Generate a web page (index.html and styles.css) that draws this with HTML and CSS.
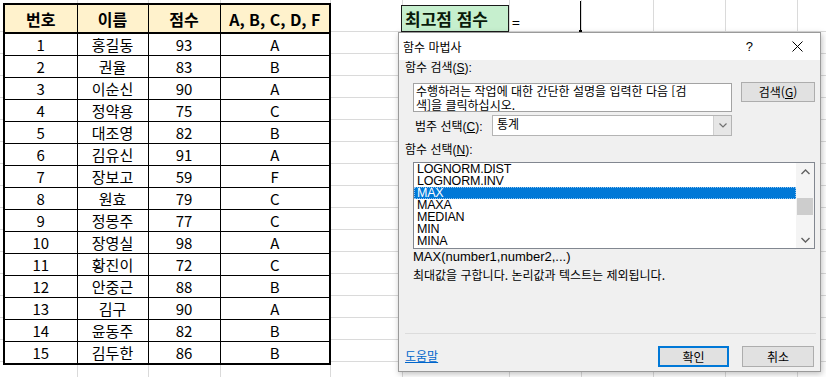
FILE: index.html
```html
<!DOCTYPE html>
<html lang="ko">
<head>
  <meta charset="UTF-8" />
  <title>함수 마법사</title>
  <link rel="stylesheet" href="styles.css">
</head>
<body>
  <div class="sheet">
    <table class="grades">
      <colgroup>
        <col class="c-no"><col class="c-name"><col class="c-score"><col class="c-grade">
      </colgroup>
      <thead>
        <tr><th>번호</th><th>이름</th><th>점수</th><th>A, B, C, D, F</th></tr>
      </thead>
      <tbody>
        <tr><td>1</td><td>홍길동</td><td>93</td><td>A</td></tr>
        <tr><td>2</td><td>권율</td><td>83</td><td>B</td></tr>
        <tr><td>3</td><td>이순신</td><td>90</td><td>A</td></tr>
        <tr><td>4</td><td>정약용</td><td>75</td><td>C</td></tr>
        <tr><td>5</td><td>대조영</td><td>82</td><td>B</td></tr>
        <tr><td>6</td><td>김유신</td><td>91</td><td>A</td></tr>
        <tr><td>7</td><td>장보고</td><td>59</td><td>F</td></tr>
        <tr><td>8</td><td>원효</td><td>79</td><td>C</td></tr>
        <tr><td>9</td><td>정몽주</td><td>77</td><td>C</td></tr>
        <tr><td>10</td><td>장영실</td><td>98</td><td>A</td></tr>
        <tr><td>11</td><td>황진이</td><td>72</td><td>C</td></tr>
        <tr><td>12</td><td>안중근</td><td>88</td><td>B</td></tr>
        <tr><td>13</td><td>김구</td><td>90</td><td>A</td></tr>
        <tr><td>14</td><td>윤동주</td><td>82</td><td>B</td></tr>
        <tr><td>15</td><td>김두한</td><td>86</td><td>B</td></tr>
      </tbody>
    </table>

    <div class="max-label">최고점 점수</div>
    <div class="formula">=</div>
  </div>

  <div class="dialog">
    <div class="dlg-title">
      <span>함수 마법사</span>
      <div class="dlg-controls">
        <span class="help-btn">?</span>
        <svg class="close-btn" width="11" height="11" viewBox="0 0 11 11">
          <path d="M0.5 0.5 L10.5 10.5 M10.5 0.5 L0.5 10.5" stroke="#000" stroke-width="1" fill="none"/>
        </svg>
      </div>
    </div>

    <div class="dlg-body">
      <div class="label">함수 검색(<u>S</u>):</div>
      <div class="search-row">
        <div class="search-input">수행하려는 작업에 대한 간단한 설명을 입력한 다음 [검<br>색]을 클릭하십시오.</div>
        <button class="btn search-btn">검색(<u>G</u>)</button>
      </div>

      <div class="category-row">
        <span class="category-label">범주 선택(<u>C</u>):</span>
        <div class="combo">
          <span class="combo-value">통계</span>
          <span class="combo-arrow">
            <svg width="8" height="5" viewBox="0 0 8 5"><path d="M0.5 0.5 L4 4 L7.5 0.5" stroke="#707070" stroke-width="1.2" fill="none"/></svg>
          </span>
        </div>
      </div>

      <div class="label pick-label">함수 선택(<u>N</u>):</div>
      <div class="listbox">
        <ul class="fn-list">
          <li>LOGNORM.DIST</li>
          <li>LOGNORM.INV</li>
          <li class="selected">MAX</li>
          <li>MAXA</li>
          <li>MEDIAN</li>
          <li>MIN</li>
          <li>MINA</li>
        </ul>
        <div class="scrollbar">
          <span class="sb-arrow">
            <svg width="9" height="6" viewBox="0 0 9 6"><path d="M0.5 5 L4.5 1 L8.5 5" stroke="#606060" stroke-width="1.4" fill="none"/></svg>
          </span>
          <div class="sb-track"><div class="sb-thumb"></div></div>
          <span class="sb-arrow">
            <svg width="9" height="6" viewBox="0 0 9 6"><path d="M0.5 1 L4.5 5 L8.5 1" stroke="#606060" stroke-width="1.4" fill="none"/></svg>
          </span>
        </div>
      </div>

      <div class="syntax">MAX(number1,number2,...)</div>
      <div class="desc">최대값을 구합니다. 논리값과 텍스트는 제외됩니다.</div>
    </div>

    <div class="dlg-footer">
      <a class="help-link">도움말</a>
      <div class="buttons">
        <button class="btn ok-btn">확인</button>
        <button class="btn cancel-btn">취소</button>
      </div>
    </div>
  </div>
</body>
</html>
```

FILE: styles.css
```css
html, body {
  margin: 0; padding: 0;
  width: 826px; height: 377px;
  overflow: hidden;
  font-family: "Noto Sans CJK KR", "Liberation Sans", sans-serif;
  color: #000;
}
body {
  position: relative;
  background: #fff;
}

/* spreadsheet area with gridlines */
.sheet {
  display: flex;
  align-items: flex-start;
  height: 377px;
  box-sizing: border-box;
  padding: 3px 0 0 3px;
  background-color: #fff;
  background-image:
    linear-gradient(#dadada, #dadada), linear-gradient(#dadada, #dadada),
    linear-gradient(#dadada, #dadada), linear-gradient(#dadada, #dadada),
    linear-gradient(#dadada, #dadada), linear-gradient(#dadada, #dadada),
    linear-gradient(#dadada, #dadada), linear-gradient(#dadada, #dadada),
    linear-gradient(#dadada, #dadada), linear-gradient(#dadada, #dadada),
    repeating-linear-gradient(to bottom, #dadada 0 1px, transparent 1px 22px);
  background-size:
    1px 100%, 1px 100%, 1px 100%, 1px 100%, 1px 100%,
    1px 100%, 1px 100%, 1px 100%, 1px 100%, 1px 100%,
    100% 100%;
  background-position:
    77px 0, 148px 0, 220px 0, 330px 0, 402px 0,
    509px 0, 581px 0, 653px 0, 725px 0, 797px 0,
    0 31px;
  background-repeat: no-repeat;
}

.grades {
  border-collapse: collapse;
  table-layout: fixed;
  border: 2px solid #000;
  background: #fff;
}
.grades .c-no { width: 73px; }
.grades .c-name { width: 71px; }
.grades .c-score { width: 72px; }
.grades .c-grade { width: 110px; }
.grades th, .grades td {
  border: 1px solid #000;
  padding: 0;
  text-align: center;
  white-space: nowrap;
}
.grades th {
  height: 26px;
  background: #fff2cc;
  font-size: 16px;
  font-weight: bold;
  line-height: 20px;
  padding-top: 1px;
  border-bottom: 2px solid #000;
}
.grades td {
  height: 21px;
  font-size: 15px;
  line-height: 20px;
}

.max-label {
  margin: 2px 0 0 70px;
  width: 108px;
  height: 27px;
  box-sizing: border-box;
  border: 1px solid #1a1a1a;
  background: #c6efce;
  font-size: 17px;
  font-weight: bold;
  line-height: 25px;
  padding-left: 3px;
  color: #0a1a0a;
}
.formula {
  position: relative;
  margin-top: -2px;
  width: 72px;
  height: 31px;
  box-sizing: border-box;
  border-right: 1px solid #000;
  font-size: 14px;
  line-height: 14px;
  padding: 14px 0 0 3px;
}
.formula::after {
  content: "";
  position: absolute;
  right: -2px; bottom: -1px;
  width: 3px; height: 3px;
  background: #000;
}

/* function wizard dialog */
.dialog {
  position: absolute;
  left: 398px; top: 32px;
  width: 423px; height: 340px;
  box-sizing: border-box;
  border: 1px solid #9a9a9a;
  background: #f0f0f0;
  box-shadow: 1px 2px 6px rgba(0,0,0,0.25);
  display: flex;
  flex-direction: column;
  font-family: "Liberation Sans", "Noto Sans CJK KR", sans-serif;
  font-size: 12px;
}
.dlg-title {
  height: 27px;
  background: #fff;
  display: flex;
  align-items: center;
  justify-content: space-between;
  padding-left: 4px;
  font-family: "Noto Sans CJK KR", sans-serif;
  font-size: 12px;
}
.dlg-controls {
  display: flex;
  align-items: center;
}
.help-btn {
  font-family: "Liberation Sans", sans-serif;
  font-size: 13px;
  margin-right: 39px;
}
.close-btn {
  margin-right: 17px;
}

.dlg-body {
  display: flex;
  flex-direction: column;
  padding: 1px 4px 0 6px;
}
.label {
  height: 15px;
  line-height: 15px;
}
u { text-decoration: underline; text-underline-offset: 1px; }

.search-row {
  display: flex;
  align-items: flex-start;
  margin-top: 6px;
  padding-left: 8px;
}
.search-input {
  margin-top: 1px;
  width: 319px;
  height: 29px;
  box-sizing: border-box;
  border: 1px solid #a3a3a3;
  background: #fff;
  padding: 0 0 0 2px;
  line-height: 13.5px;
  white-space: nowrap;
  font-family: "Noto Sans CJK KR", sans-serif;
}
.btn {
  font-family: "Noto Sans CJK KR", "Liberation Sans", sans-serif;
  font-size: 12px;
  color: #000;
  background: #e1e1e1;
  border: 1px solid #adadad;
  padding: 0;
  box-sizing: border-box;
  line-height: 16px;
}
.search-btn {
  margin-left: 9px;
  width: 74px;
  height: 20px;
}

.category-row {
  display: flex;
  align-items: center;
  margin-top: 3px;
  height: 21px;
  padding-left: 10px;
}
.category-label {
  width: 77px;
}
.combo {
  display: flex;
  width: 240px;
  height: 21px;
  box-sizing: border-box;
  border: 1px solid #b4b4b4;
  background: #fff;
}
.combo-value {
  flex: 1;
  padding-left: 4px;
  line-height: 19px;
}
.combo-arrow {
  width: 17px;
  display: flex;
  align-items: center;
  justify-content: center;
  background: #e6e6e6;
  border-left: 1px solid #cfcfcf;
}

.pick-label {
  margin-top: 7px;
}
.listbox {
  display: flex;
  margin: 4px 0 0 8px;
  width: 402px;
  height: 87px;
  box-sizing: border-box;
  border: 1px solid #828790;
  background: #fff;
}
.fn-list {
  list-style: none;
  margin: 0; padding: 0;
  flex: 1;
}
.fn-list li {
  height: 12px;
  line-height: 12px;
  padding-left: 3px;
  font-size: 12.5px;
  letter-spacing: -0.2px;
}
.fn-list li.selected {
  background: #0078d7;
  color: #fff;
  outline: 1px dotted #8ec3ee;
  outline-offset: -1px;
}
.scrollbar {
  width: 18px;
  display: flex;
  flex-direction: column;
  background: #f4f4f4;
}
.sb-arrow {
  height: 17px;
  display: flex;
  align-items: center;
  justify-content: center;
}
.sb-track {
  flex: 1;
  padding: 18px 1px 0;
}
.sb-thumb {
  height: 17px;
  background: #cdcdcd;
}

.syntax {
  margin-top: 1px;
  padding-left: 8px;
  height: 14px;
  line-height: 14px;
  font-size: 13px;
}
.desc {
  margin-top: 4px;
  padding-left: 8px;
  height: 14px;
  line-height: 14px;
  font-family: "Noto Sans CJK KR", sans-serif;
}

.dlg-footer {
  margin: auto 4px 0 6px;
  border-top: 1px solid #dcdcdc;
  height: 38px;
  box-sizing: border-box;
  padding: 12px 2px 0 0;
  display: flex;
  justify-content: space-between;
  align-items: flex-start;
}
.help-link {
  color: #0066cc;
  text-decoration: underline;
  font-family: "Noto Sans CJK KR", sans-serif;
  line-height: 18px;
  margin-top: 1px;
}
.buttons {
  display: flex;
  gap: 13px;
}
.ok-btn {
  width: 71px;
  height: 21px;
  border: 2px solid #0078d7;
}
.cancel-btn {
  width: 72px;
  height: 21px;
}
```
